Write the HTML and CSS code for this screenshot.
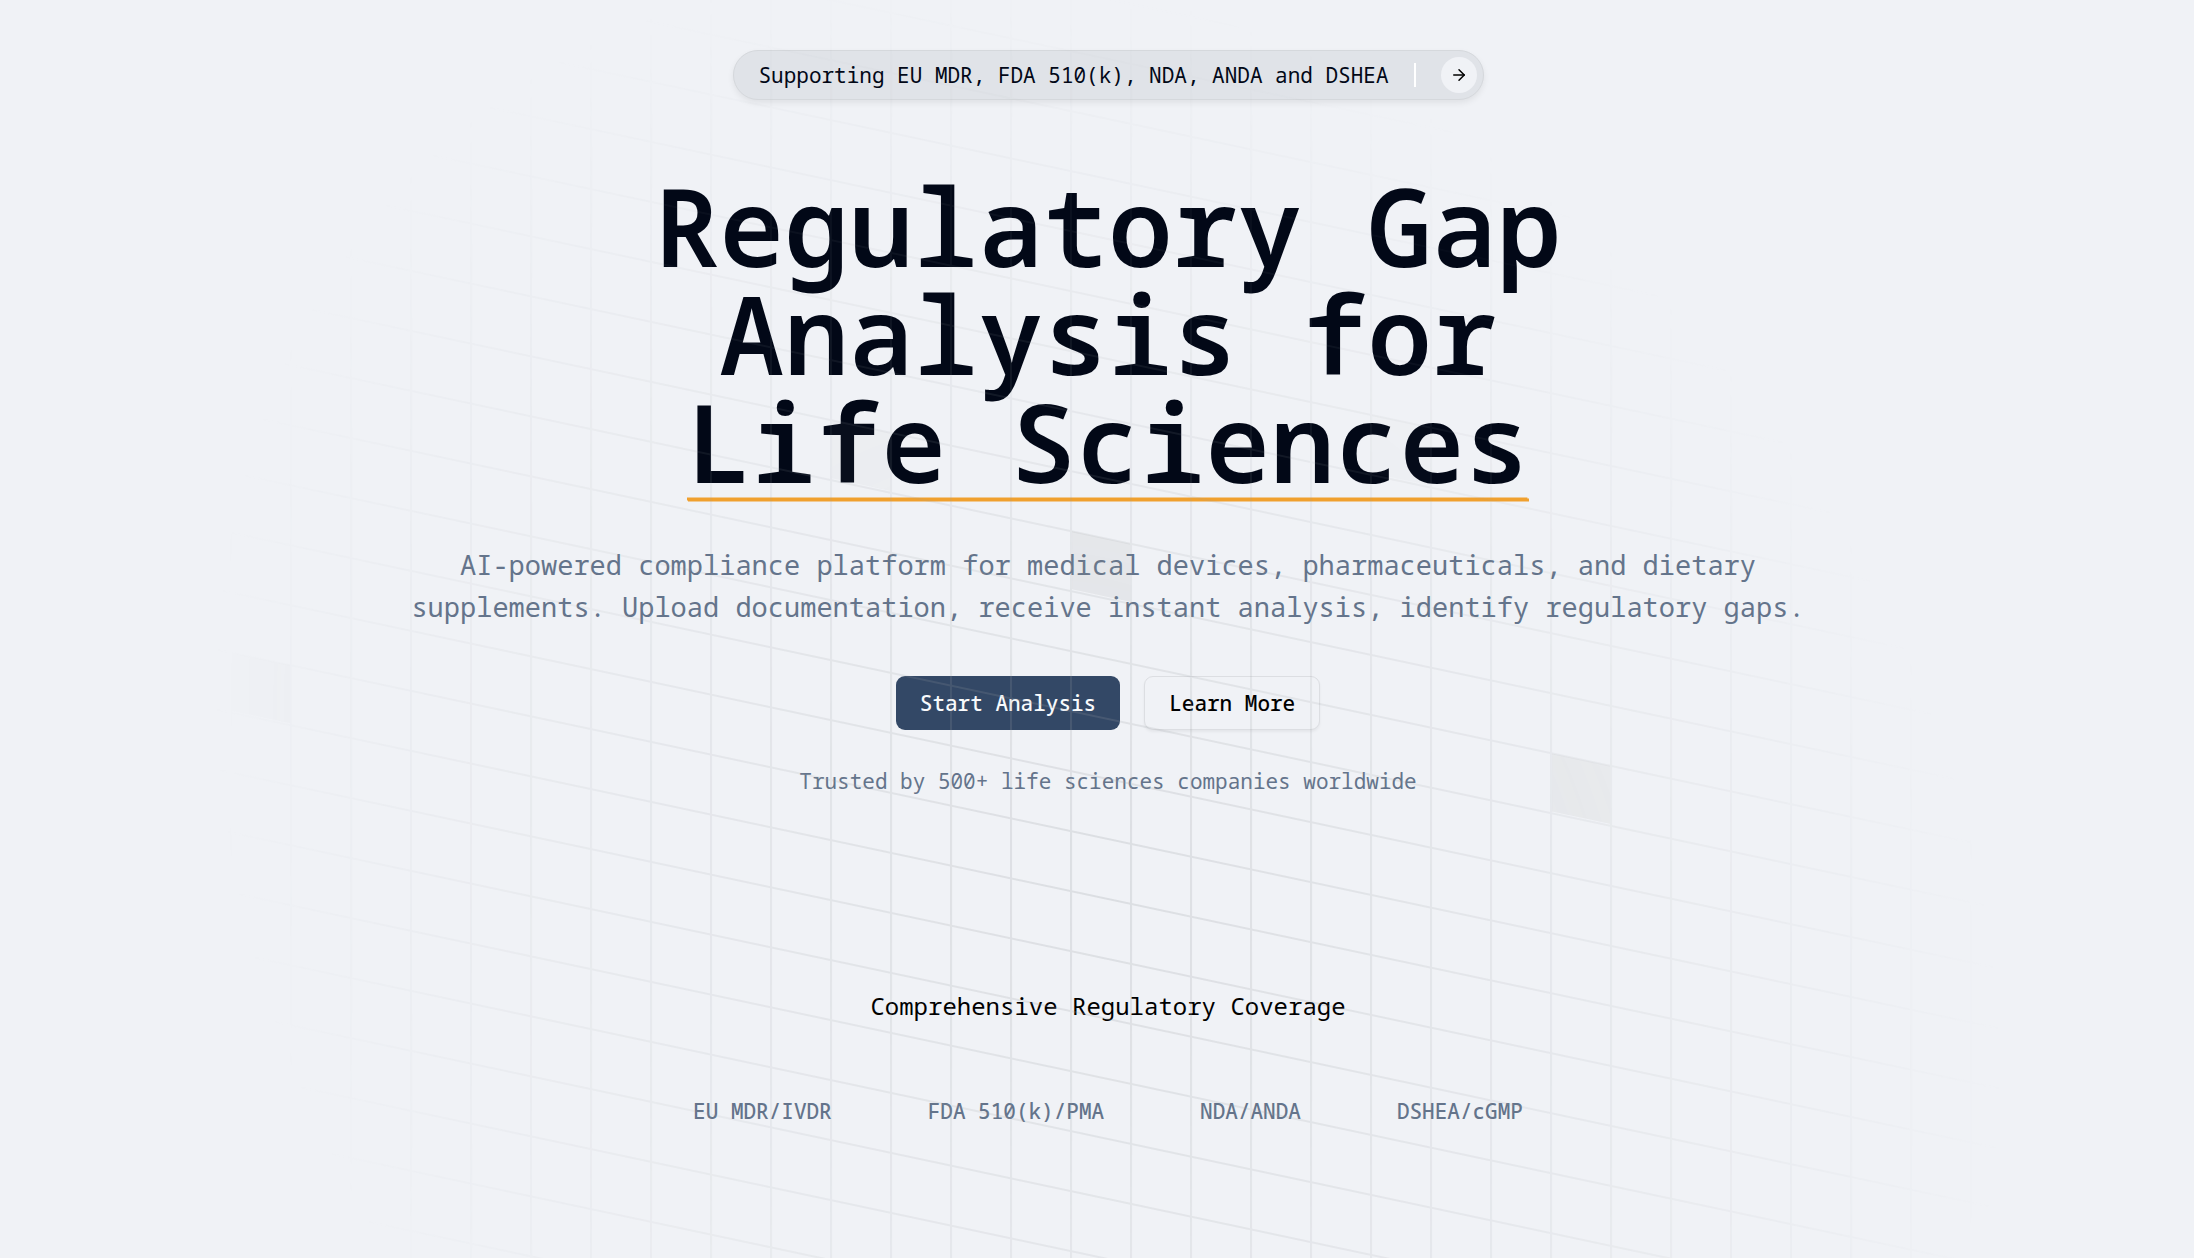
FILE: index.html
```html
<!DOCTYPE html>
<html lang="en">
<head>
    <meta charset="UTF-8">
    <meta name="viewport" content="width=device-width, initial-scale=1.0">
    <title>Regulatory Gap Analysis for Life Sciences</title>
    <link rel="stylesheet" href="styles.css">
</head>
<body>
    <main class="hero">
        <a class="announcement" href="#updates">
            <span>Supporting EU MDR, FDA 510(k), NDA, ANDA and DSHEA</span>
            <span class="announcement-divider"></span>
            <span class="announcement-icon">
                <svg viewBox="0 0 24 24" fill="none" stroke="currentColor" stroke-width="2" stroke-linecap="round" stroke-linejoin="round" aria-hidden="true">
                    <path d="M5 12h14"/>
                    <path d="m12 5 7 7-7 7"/>
                </svg>
            </span>
        </a>

        <h1 class="title">
            Regulatory Gap<br>Analysis for<br>
            <span class="highlight">Life Sciences<svg class="underline" viewBox="0 0 842 6" preserveAspectRatio="none" aria-hidden="true">
                <path d="M0 2 L840 2 M1 3 L842 3" fill="none" stroke="currentColor" stroke-width="3"/>
            </svg></span>
        </h1>

        <p class="description">
            AI-powered compliance platform for medical devices, pharmaceuticals, and dietary
            supplements. Upload documentation, receive instant analysis, identify regulatory gaps.
        </p>

        <div class="actions">
            <button class="btn btn-primary" type="button">Start Analysis</button>
            <button class="btn btn-outline" type="button">Learn More</button>
        </div>

        <p class="trusted">Trusted by 500+ life sciences companies worldwide</p>

        <section class="coverage">
            <h2 class="coverage-title">Comprehensive Regulatory Coverage</h2>
            <ul class="coverage-list">
                <li>EU MDR/IVDR</li>
                <li>FDA 510(k)/PMA</li>
                <li>NDA/ANDA</li>
                <li>DSHEA/cGMP</li>
            </ul>
        </section>

        <!-- Skewed grid, laid over the content -->
        <svg class="grid-pattern" aria-hidden="true">
            <defs>
                <pattern id="grid" width="60" height="60" patternUnits="userSpaceOnUse" x="28" y="15">
                    <path d="M1 60V1H60" fill="none"/>
                </pattern>
            </defs>
            <rect width="100%" height="100%" fill="url(#grid)" stroke="none"/>
            <g class="grid-cells">
                <rect x="1050" y="916" width="58" height="58" fill-opacity="0.18"/>
                <rect x="1530" y="1036" width="58" height="58" fill-opacity="0.22"/>
                <rect x="210" y="1216" width="58" height="58" fill-opacity="0.3"/>
                <rect x="810" y="856" width="58" height="58" fill-opacity="0.09"/>
                <rect x="1350" y="736" width="58" height="58" fill-opacity="0.07"/>
            </g>
        </svg>
    </main>
</body>
</html>
```
FILE: styles.css
```css
* {
    margin: 0;
    padding: 0;
    box-sizing: border-box;
}

body {
    background: #f0f2f6;
    color: #020817;
    font-family: "Noto Sans Mono", "Liberation Mono", monospace;
    font-size: 21px;
    line-height: 30px;
}

.hero {
    position: relative;
    display: flex;
    flex-direction: column;
    align-items: center;
    min-height: 100vh;
    margin-left: 22px;
    padding: 50px 24px;
    overflow: hidden;
    text-align: center;
}

.announcement {
    display: flex;
    align-items: center;
    gap: 25px;
    padding: 6px 6px 6px 25px;
    margin-bottom: 72px;
    border: 1px solid #d5d8dc;
    border-radius: 25px;
    background: #e0e3e8;
    box-shadow: 0 3px 6px rgba(0, 0, 0, 0.07);
    color: inherit;
    text-decoration: none;
}

.announcement-divider {
    width: 2px;
    height: 24px;
    background: #ffffff;
}

.announcement-icon {
    display: flex;
    align-items: center;
    justify-content: center;
    width: 36px;
    height: 36px;
    border-radius: 50%;
    background: #f0f2f6;
    color: #000000;
}

.announcement-icon svg {
    width: 18px;
    height: 18px;
}

.title {
    margin-bottom: 48px;
    font-size: 108px;
    font-weight: 600;
    line-height: 108px;
}

.highlight {
    position: relative;
    display: inline-block;
}

.underline {
    position: absolute;
    left: 0;
    bottom: -7px;
    width: 100%;
    height: 6px;
    color: #f0a02e;
}

.description {
    max-width: 1440px;
    margin-bottom: 48px;
    color: #64748b;
    font-size: 27px;
    line-height: 42px;
}

.actions {
    display: flex;
    gap: 24px;
    margin-bottom: 36px;
}

.btn {
    height: 54px;
    padding: 0 24px;
    border: none;
    border-radius: 9px;
    font-family: inherit;
    font-size: 21px;
    font-weight: 500;
    cursor: pointer;
}

.btn-primary {
    background: #334866;
    color: #f8fafc;
}

.btn-outline {
    border: 1px solid #dcdee2;
    background: #f0f2f6;
    box-shadow: 0 2px 3px rgba(0, 0, 0, 0.05);
    color: #000000;
}

.trusted {
    margin-bottom: 192px;
    color: #64748b;
}

.coverage-title {
    margin-bottom: 72px;
    color: #000000;
    font-size: 24px;
    font-weight: 400;
    line-height: 36px;
}

.coverage-list {
    display: flex;
    justify-content: center;
    gap: 96px;
    color: #64748b;
    font-weight: 500;
    list-style: none;
}

.grid-pattern {
    position: absolute;
    top: -30%;
    left: 0;
    width: 100%;
    height: 200%;
    transform: skewY(12deg);
    stroke: rgba(156, 160, 165, 0.24);
    stroke-width: 2;
    pointer-events: none;
    -webkit-mask-image: radial-gradient(900px circle at center, #ffffff, transparent);
    mask-image: radial-gradient(900px circle at center, #ffffff, transparent);
}

.grid-cells {
    fill: #969691;
    stroke: none;
}
```
